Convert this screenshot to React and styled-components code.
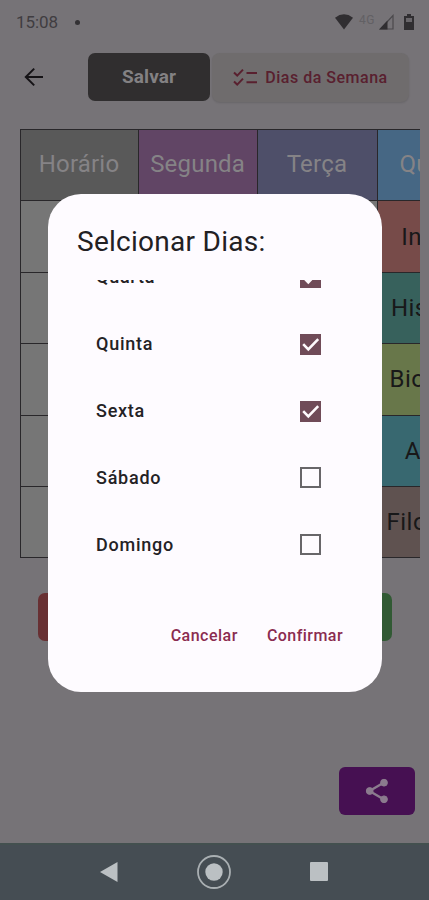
import React, { useState } from 'react'
import styled, { createGlobalStyle } from 'styled-components'

const columns = [
    { name: 'Horário', color: '#595959' },
    { name: 'Segunda', color: '#614565' },
    { name: 'Terça', color: '#4e4f69' },
    { name: 'Quarta', color: '#466784' },
]

const lessons = [
    { name: 'Inglês', color: '#774b49' },
    { name: 'História', color: '#37615c' },
    { name: 'Biologia', color: '#68774a' },
    { name: 'Artes', color: '#386870' },
    { name: 'Filosofia', color: '#5f5250' },
]

function App() {
    const [days, setDays] = useState([
        { name: 'Quarta', checked: true },
        { name: 'Quinta', checked: true },
        { name: 'Sexta', checked: true },
        { name: 'Sábado', checked: false },
        { name: 'Domingo', checked: false },
    ])

    const toggle = (name) => {
        setDays(days.map((d) => (d.name === name ? { ...d, checked: !d.checked } : d)))
    }

    return (
        <Screen>
            <GlobalStyle/>
            <StatusBar>
                <Clock>15:08</Clock>
                <Dot/>
                <StatusIcons/>
            </StatusBar>
            <Header>
                <BackButton>
                    <svg width="20" height="20" viewBox="0 0 20 20" fill="none" stroke="#151316" strokeWidth="2">
                        <path d="M19 10H2M10.2 1.6L1.8 10L10.2 18.4"/>
                    </svg>
                </BackButton>
                <SaveButton>Salvar</SaveButton>
                <DaysButton>
                    <svg width="25" height="18" viewBox="0 0 25 18" fill="none" stroke="#59202f" strokeWidth="2">
                        <path d="M1 4.6L4.2 7.6L10 1.6M1 13.6L4.2 16.6L10 10.6M13.5 5H24M13.5 14.3H24"/>
                    </svg>
                    Dias da Semana
                </DaysButton>
            </Header>
            <TableWindow>
                <Table>
                    {columns.map((c) => (
                        <HeadCell key={c.name} $color={c.color}>{c.name}</HeadCell>
                    ))}
                    {lessons.map((l) => (
                        <React.Fragment key={l.name}>
                            <Cell/>
                            <Cell/>
                            <Cell/>
                            <Cell $color={l.color}>{l.name}</Cell>
                        </React.Fragment>
                    ))}
                </Table>
            </TableWindow>
            <Actions>
                <ActionButton $color="#683033"/>
                <ActionButton $color="#315a34"/>
            </Actions>
            <ShareButton>
                <svg width="24" height="26" viewBox="0 0 24 26" fill="#8b7b8e" stroke="#8b7b8e">
                    <path d="M19 4.5L4.5 13L19 21.5" fill="none" strokeWidth="2.4"/>
                    <circle cx="19" cy="4.7" r="3.4"/>
                    <circle cx="4.7" cy="13" r="3.4"/>
                    <circle cx="19" cy="21.3" r="3.4"/>
                </svg>
            </ShareButton>
            <NavBar>
                <svg width="18" height="20" viewBox="0 0 18 20"><path d="M0 10L17.5 0V20Z" fill="#bbc0c3"/></svg>
                <svg width="34" height="34" viewBox="0 0 34 34">
                    <circle cx="17" cy="17" r="16" fill="none" stroke="#a9afb2" strokeWidth="1.8"/>
                    <circle cx="17" cy="17" r="8.7" fill="#bbc0c3"/>
                </svg>
                <Recents/>
            </NavBar>
            <Overlay>
                <Dialog>
                    <Title>Selcionar Dias:</Title>
                    <DayList>
                        {days.map((d) => (
                            <DayRow key={d.name} onClick={() => toggle(d.name)}>
                                {d.name}
                                <Checkbox $checked={d.checked}>
                                    {d.checked &&
                                        <svg width="21" height="21" viewBox="0 0 21 21" fill="none" stroke="#fffafd" strokeWidth="2.6">
                                            <path d="M3.2 10.2L8.3 15.3L18.2 5.2"/>
                                        </svg>
                                    }
                                </Checkbox>
                            </DayRow>
                        ))}
                    </DayList>
                    <DialogActions>
                        <TextButton $spacing="0.5px">Cancelar</TextButton>
                        <TextButton $spacing="0.45px">Confirmar</TextButton>
                    </DialogActions>
                </Dialog>
            </Overlay>
        </Screen>
    )
}

function StatusIcons() {
    return (
        <Icons>
            <svg width="18" height="16" viewBox="0 0 18 16">
                <path d="M0 3.7Q9-3.2 18 3.7L9 15.5Z" fill="#302e31"/>
            </svg>
            <Network>4G</Network>
            <svg width="15" height="16" viewBox="0 0 15 16">
                <path d="M1.5 15L14 1.5V15Z" fill="none" stroke="#4b494c" strokeWidth="1.2"/>
                <path d="M0 15.5L8.5 6.5V15.5Z" fill="#302e31"/>
            </svg>
            <svg width="10" height="16" viewBox="0 0 10 16">
                <path d="M3 0H7V2H10V16H0V2H3Z" fill="#302e31"/>
                <path d="M2 4H8V8H2Z" fill="#69666a"/>
            </svg>
        </Icons>
    )
}

export default App

const GlobalStyle = createGlobalStyle`
    * {
        box-sizing: border-box;
    }

    body {
        margin: 0;
        background: #767377;
        font-family: Roboto, "Liberation Sans", sans-serif;
    }

    button {
        border: none;
        padding: 0;
        background: none;
        font-family: inherit;
    }

    svg {
        display: block;
        flex-shrink: 0;
    }
`

const Screen = styled.div`
    position: relative;
    width: 429px;
    height: 900px;
    overflow: hidden;
    display: flex;
    flex-direction: column;
    background: #767377;
`

const StatusBar = styled.div`
    height: 53px;
    padding: 11px 15px 0 16px;
    display: flex;
    align-items: flex-start;
`

const Clock = styled.span`
    font-size: 17px;
    line-height: 23px;
    letter-spacing: -0.1px;
    color: #403d41;
`

const Dot = styled.div`
    width: 5px;
    height: 5px;
    margin: 9px 0 0 17px;
    border-radius: 50%;
    background: #333134;
`

const Icons = styled.div`
    margin: 3px 0 0 auto;
    display: flex;
    align-items: flex-start;

    > svg:last-child {
        margin-left: 10px;
    }
`

const Network = styled.span`
    width: 18px;
    margin: -1px 2px 0 6px;
    font-size: 12px;
    line-height: 14px;
    letter-spacing: 0.5px;
    color: #626064;
`

const Header = styled.div`
    height: 76px;
    padding-left: 24px;
    display: flex;
    align-items: flex-start;
`

const BackButton = styled.button`
    width: 64px;
    height: 48px;
    display: flex;
    align-items: center;
`

const SaveButton = styled.button`
    width: 122px;
    height: 48px;
    padding-bottom: 1px;
    border-radius: 7px;
    background: #302e2f;
    color: #838183;
    font-size: 19px;
    font-weight: 700;
    letter-spacing: 0.1px;
`

const DaysButton = styled.button`
    width: 197px;
    height: 49px;
    margin-left: 2px;
    padding-bottom: 1px;
    border-radius: 8px;
    background: #6f6c6d;
    box-shadow: 0 1px 2px rgba(0, 0, 0, 0.12);
    color: #59202f;
    display: flex;
    align-items: center;
    justify-content: center;
    gap: 7px;
    font-size: 16px;
    font-weight: 500;
    letter-spacing: 0.5px;
`

const TableWindow = styled.div`
    width: 401px;
    height: 429px;
    margin-left: 19px;
    padding-left: 1px;
    overflow: hidden;
`

const Table = styled.div`
    width: 478px;
    height: 429px;
    display: grid;
    grid-template-columns: 118px repeat(3, 119.3px);
    grid-template-rows: repeat(6, 71.4px);
    border-top: 1px solid #29272a;
    border-left: 1px solid #29272a;
`

const Cell = styled.div`
    padding-right: 4px;
    display: flex;
    align-items: center;
    justify-content: center;
    border-right: 1px solid #29272a;
    border-bottom: 1px solid #29272a;
    background: ${(props) => props.$color || '#767676'};
    color: #181819;
    font-size: 24px;
    letter-spacing: 0.5px;
`

const HeadCell = styled(Cell)`
    padding: 0 1px 2px 0;
    color: #858386;
    letter-spacing: 0.2px;
`

const Actions = styled.div`
    height: 48px;
    margin: 35px 37px 0 38px;
    display: flex;
    justify-content: space-between;
`

const ActionButton = styled.button`
    width: 122px;
    border-radius: 7px;
    background: ${(props) => props.$color};
`

const ShareButton = styled.button`
    width: 76px;
    height: 48px;
    margin: 126px 14px 28px auto;
    display: flex;
    align-items: center;
    justify-content: center;
    border-radius: 6px;
    background: #461052;
`

const NavBar = styled.div`
    flex: 1;
    padding: 0 101px 2px 100px;
    display: flex;
    align-items: center;
    justify-content: space-between;
    border-top: 2px solid #43504f;
    background: #454d53;
`

const Recents = styled.div`
    width: 18px;
    height: 19px;
    border-radius: 1px;
    background: #bbc0c3;
`

const Overlay = styled.div`
    position: absolute;
    inset: 0;
    padding: 194px 47px 0 48px;
`

const Dialog = styled.div`
    height: 498px;
    padding-top: 28px;
    border-radius: 33px;
    background: #fefbff;
    display: flex;
    flex-direction: column;
`

const Title = styled.h2`
    height: 58px;
    margin: 0;
    padding-left: 29px;
    font-size: 28px;
    font-weight: 400;
    line-height: 40px;
    letter-spacing: 0.27px;
    color: #222023;
`

const DayList = styled.div`
    height: 298px;
    padding: 0 61px 0 48px;
    display: flex;
    flex-direction: column;
    justify-content: flex-end;
    overflow: hidden;
`

const DayRow = styled.div`
    flex: none;
    height: 66.8px;
    display: flex;
    align-items: center;
    justify-content: space-between;
    font-size: 18px;
    font-weight: 500;
    line-height: 22px;
    letter-spacing: 0.75px;
    color: #242225;
    cursor: pointer;
`

const Checkbox = styled.div`
    width: 21px;
    height: 21px;
    border: ${(props) => (props.$checked ? 'none' : '2px solid #686669')};
    background: ${(props) => (props.$checked ? '#704b58' : 'transparent')};
`

const DialogActions = styled.div`
    margin-top: 47px;
    padding-right: 39px;
    display: flex;
    justify-content: flex-end;
    gap: 29px;
`

const TextButton = styled.button`
    font-size: 16px;
    font-weight: 500;
    line-height: 22px;
    letter-spacing: ${(props) => props.$spacing};
    color: #8b2c50;
`
